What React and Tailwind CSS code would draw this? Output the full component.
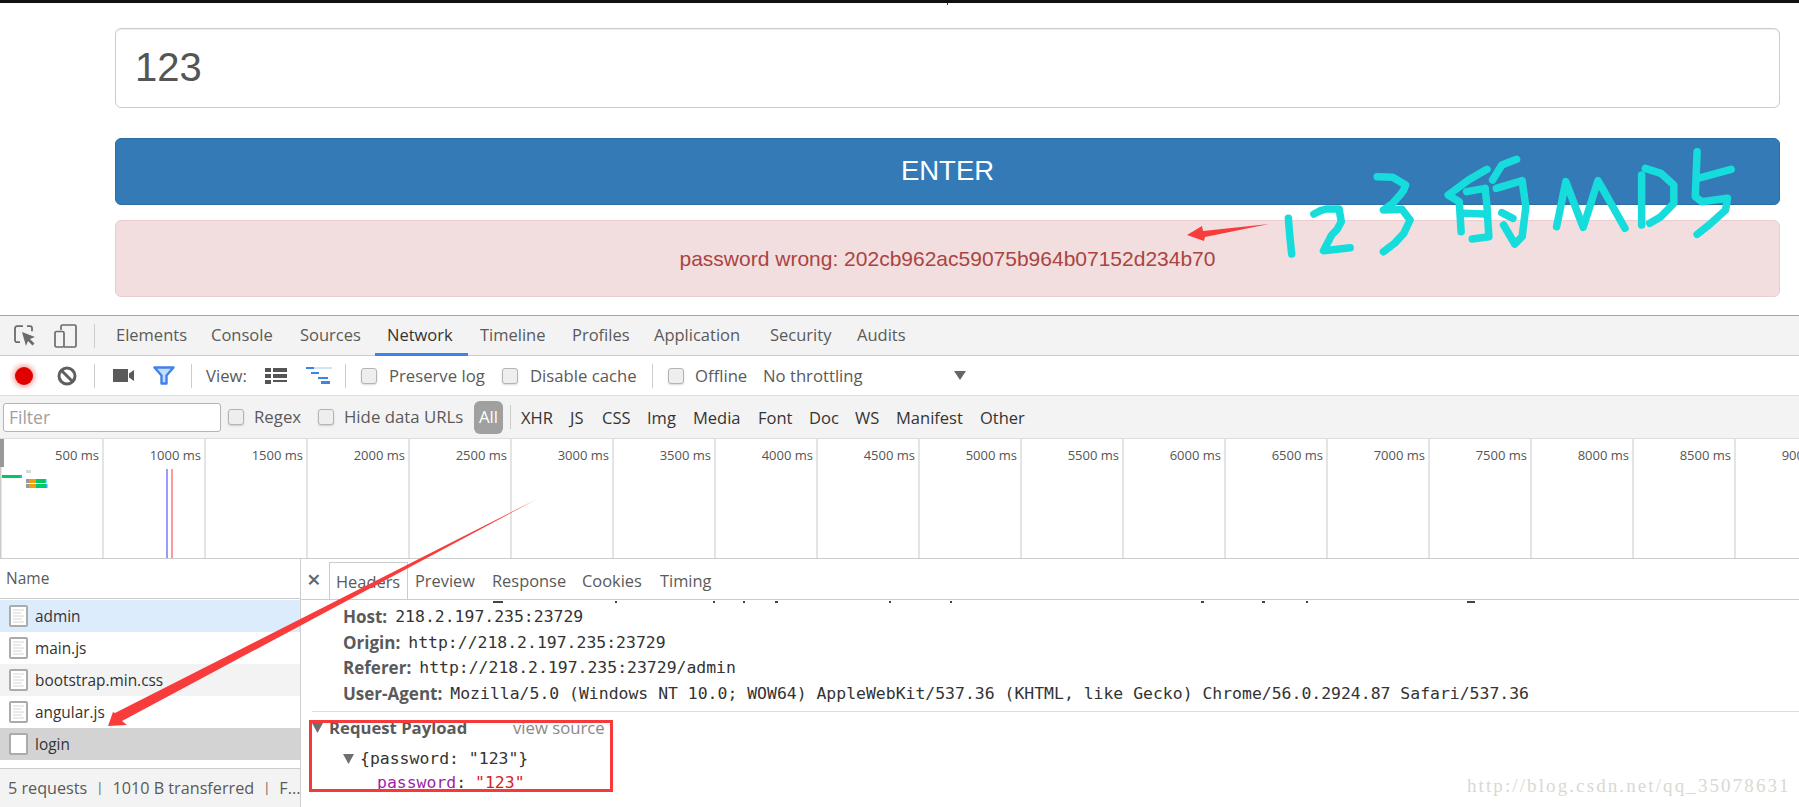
import React from "react";

const SANS = "font-['Open_Sans','Noto_Sans',sans-serif]";
const MONO = "font-['DejaVu_Sans_Mono',monospace]";

function Check({ className = "" }) {
  return <span className={"block shrink-0 w-[16px] h-[16px] rounded-[3px] border border-[#b4b4b4] bg-[#eeeeee] shadow-[0_1px_2px_rgba(0,0,0,0.15)] " + className} />;
}

function Sep({ className = "" }) {
  return <span className={"block shrink-0 w-[1px] bg-[#cccccc] " + className} />;
}

function FileIcon({ blank }) {
  return (
    <svg width="19" height="22" viewBox="0 0 19 22" className="shrink-0">
      <rect x="1" y="1" width="17" height="20" rx="1" fill="#fff" stroke="#ababab" strokeWidth="2" />
      {!blank && (
        <g stroke="#d5d5d5" strokeWidth="1.2">
          <path d="M4 5h11M4 8h8M4 11h11M4 14h9M4 17h11" />
        </g>
      )}
    </svg>
  );
}

const Triangle = ({ className = "" }) => (
  <svg width="11" height="10" viewBox="0 0 11 10" className={"shrink-0 " + className}>
    <path d="M0 0h11L5.5 10z" fill="#6e6e6e" />
  </svg>
);

const tabs = [
  ["Elements", "w-[95px]"],
  ["Console", "w-[89px]"],
  ["Sources", "w-[87px]"],
  ["Network", "w-[93px] text-[#333]"],
  ["Timeline", "w-[92px]"],
  ["Profiles", "w-[82px]"],
  ["Application", "w-[116px]"],
  ["Security", "w-[87px]"],
  ["Audits", "w-[70px]"],
];

const filters = [
  ["XHR", "w-[49px]"],
  ["JS", "w-[32px]"],
  ["CSS", "w-[45px]"],
  ["Img", "w-[46px]"],
  ["Media", "w-[65px]"],
  ["Font", "w-[51px]"],
  ["Doc", "w-[46px]"],
  ["WS", "w-[41px]"],
  ["Manifest", "w-[84px]"],
  ["Other", "w-[60px]"],
];

const times = [500, 1000, 1500, 2000, 2500, 3000, 3500, 4000, 4500, 5000, 5500, 6000, 6500, 7000, 7500, 8000, 8500, 9000];

const rows = [
  ["admin", "bg-[#dcecfc]", false],
  ["main.js", "bg-white", false],
  ["bootstrap.min.css", "bg-[#f3f3f3]", false],
  ["angular.js", "bg-white", false],
  ["login", "bg-[#d3d3d3]", true],
];

const strokes = [
  "293,235 295,265 297,290 302,342",
  "362,222 380,212 395,207 430,207 436,245 425,268 410,285 388,332 425,328 460,323",
  "533,110 575,112 610,135 605,150 595,165 575,190 550,210 600,208 622,240 605,280 580,310 550,335",
  "830,88 780,120 725,165 755,185 760,275",
  "775,155 825,145 830,200 835,290 790,297",
  "765,220 825,222",
  "910,58 870,75 845,120",
  "855,145 925,122 935,200 925,290 905,312 875,255",
  "870,218 900,235",
  "1018,260 1043,125 1090,262 1130,122 1165,190 1203,265",
  "1248,105 1248,255",
  "1258,85 1300,100 1335,135 1335,190 1300,230 1270,250",
  "1398,35 1393,170 1410,185 1480,175 1475,210 1430,255 1398,283",
  "1400,115 1490,88",
];

const clipped = [
  [493, 10], [615, 2], [713, 2], [743, 2], [775, 3], [889, 2], [950, 2], [1201, 3], [1262, 3], [1306, 2], [1467, 8],
];

export default function App() {
  return (
    <div className={"relative w-[1799px] h-[807px] overflow-hidden bg-white flex flex-col " + SANS}>
      <div className="h-[3px] bg-[#111] shrink-0" />

      <div className="h-[312px] shrink-0 pl-[115px] pr-[19px] pt-[25px] font-['Liberation_Sans',sans-serif]">
        <div className="h-[80px] border border-[#cccccc] rounded-[6px] pl-[19px] pb-[2px] flex items-center text-[40px] text-[#555555] shadow-[inset_0_1px_1px_rgba(0,0,0,0.075)]">
          123
        </div>
        <div className="mt-[30px] h-[67px] bg-[#337ab7] border border-[#2e6da4] rounded-[6px] pb-[2px] flex items-center justify-center text-[27.5px] text-white">
          ENTER
        </div>
        <div className="mt-[15px] h-[77px] bg-[#f2dede] border border-[#ebccd1] rounded-[6px] flex items-center justify-center text-[21px] text-[#a94442]">
          password wrong: 202cb962ac59075b964b07152d234b70
        </div>
      </div>

      <div className="flex-1 flex flex-col min-h-0 text-[#5a5a5a] border-t border-[#a3a3a3]">
        {/* main tabs */}
        <div className="h-[40px] shrink-0 bg-[#f3f3f3] border-b border-[#cccccc] flex items-center text-[16.5px] relative">
          <svg width="22" height="21" viewBox="0 0 22 21" className="ml-[14px] shrink-0">
            <path d="M9 1.2H3A2 2 0 0 0 1 3.2v12a2 2 0 0 0 2 2h3M13 1.2h3a2 2 0 0 1 2 2v3" fill="none" stroke="#6b6b6b" strokeWidth="1.8" />
            <path d="M8 7l13 5-5 2 4.5 4.5-2 2L14 16l-2 5z" fill="#6b6b6b" />
          </svg>
          <svg width="23" height="24" viewBox="0 0 23 24" className="ml-[18px] shrink-0">
            <path d="M7 6V2.5A1.5 1.5 0 0 1 8.500 1h12A1.500 1.500 0 0 1 22 2.500v19a1.500 1.500 0 0 1-1.500 1.500H10" fill="none" stroke="#6b6b6b" strokeWidth="1.7" />
            <rect x="1" y="7.500" width="9" height="15.500" rx="1.500" fill="none" stroke="#6b6b6b" strokeWidth="1.7" />
          </svg>
          <Sep className="ml-[17px] h-[24px]" />
          <div className="flex ml-[21px]">
            {tabs.map(([t, c]) => (
              <span key={t} className={"block " + c}>{t}</span>
            ))}
          </div>
          <span className="absolute left-[375px] top-[37px] w-[93px] h-[3px] bg-[#3d83ea]" />
        </div>

        {/* toolbar */}
        <div className="h-[40px] shrink-0 bg-white border-b border-[#dddddd] flex items-center text-[16.7px]">
          <span className="block ml-[15px] w-[18px] h-[18px] rounded-full bg-[#e00000] shadow-[0_0_5px_2px_rgba(224,0,0,0.35)] shrink-0" />
          <svg width="20" height="20" viewBox="0 0 20 20" className="ml-[24px] shrink-0">
            <circle cx="10" cy="10" r="8" fill="none" stroke="#5f5f5f" strokeWidth="3" />
            <path d="M4.500 4.500l11 11" stroke="#5f5f5f" strokeWidth="3" />
          </svg>
          <Sep className="ml-[17px] h-[24px]" />
          <svg width="21" height="13" viewBox="0 0 21 13" className="ml-[18px] shrink-0">
            <path d="M0 0h15v13H0zM16 4.500L21 1v11l-5-3.500z" fill="#5a5a5a" />
          </svg>
          <svg width="22" height="19" viewBox="0 0 22 19" className="ml-[19px] shrink-0">
            <path d="M1.500 1.500h19l-7 8v8h-5v-8z" fill="#c9dcf9" stroke="#3d83ea" strokeWidth="2.400" strokeLinejoin="round" />
          </svg>
          <Sep className="ml-[16px] h-[24px]" />
          <span className="block ml-[14px] w-[59px]">View:</span>
          <svg width="22" height="16" viewBox="0 0 22 16" className="shrink-0">
            <path d="M0 0h6v4H0zM8 0h14v4H8zM0 6h6v4H0zM8 6h14v4H8zM0 12h6v4H0zM8 12h14v2H8z" fill="#555" />
          </svg>
          <svg width="26" height="17" viewBox="0 0 26 17" className="ml-[19px] shrink-0">
            <path d="M8 0h18v2H8z" fill="#d5e3fa" />
            <path d="M0 0h8v2H0zM5 5h8v2H5zM12 10h10v2H12zM15 14h9v3h-9z" fill="#3d83ea" />
          </svg>
          <Sep className="ml-[13px] h-[24px]" />
          <Check className="ml-[15px]" />
          <span className="block ml-[12px] w-[113px]">Preserve log</span>
          <Check />
          <span className="block ml-[12px] w-[122px]">Disable cache</span>
          <Sep className="h-[24px]" />
          <Check className="ml-[15px]" />
          <span className="block ml-[11px] w-[68px]">Offline</span>
          <span className="block w-[191px]">No throttling</span>
          <svg width="12" height="9" viewBox="0 0 12 9" className="shrink-0">
            <path d="M0 0h12L6 9z" fill="#666" />
          </svg>
        </div>

        {/* filter bar */}
        <div className="h-[43px] shrink-0 bg-[#f3f3f3] border-b border-[#dddddd] flex items-center text-[16.8px]">
          <div className="ml-[3px] w-[218px] h-[29px] bg-white border border-[#b5b5b5] rounded-[3px] pl-[5px] flex items-center text-[17.5px] text-[#a0a0a0] shrink-0">Filter</div>
          <Check className="ml-[7px]" />
          <span className="block ml-[10px] w-[64px]">Regex</span>
          <Check />
          <span className="block ml-[10px] w-[130px]">Hide data URLs</span>
          <span className="block w-[29px] h-[33px] rounded-[6px] bg-[#a0a0a0] text-white flex items-center justify-center shrink-0">All</span>
          <Sep className="ml-[7px] h-[24px]" />
          <div className="flex ml-[10px] pt-[3px] text-[16.5px] text-[#333]">
            {filters.map(([t, c]) => (
              <span key={t} className={"block " + c}>{t}</span>
            ))}
          </div>
        </div>

        {/* overview */}
        <div className="h-[120px] shrink-0 relative border-b border-[#cccccc] flex overflow-hidden">
          <div className="flex shrink-0 pl-[2px]">
            {times.map((t) => (
              <div key={t} className="w-[102px] shrink-0 border-r-2 border-[#e4e4e4] text-right pr-[3px] pt-[6px] text-[13px] leading-[20px] text-[#555] whitespace-nowrap">
                {t} ms
              </div>
            ))}
          </div>
          <svg width="180" height="119" viewBox="0 0 180 119" className="absolute left-0 top-0">
            <rect x="0" y="0" width="4" height="28" fill="#999" />
            <rect x="0" y="28" width="1.500" height="91" fill="#ccc" />
            <rect x="2" y="36" width="18" height="3" fill="#00c864" />
            <rect x="20" y="36" width="2" height="3" fill="#22b8ee" />
            <rect x="26" y="31" width="5" height="3" fill="#d8d8d8" />
            <rect x="26" y="40" width="3" height="4" fill="#999" />
            <rect x="29" y="40" width="7" height="4" fill="#f39c12" />
            <rect x="36" y="40" width="9" height="4" fill="#00c864" />
            <rect x="45" y="40" width="1.500" height="4" fill="#22b8ee" />
            <rect x="26" y="45" width="3" height="4" fill="#999" />
            <rect x="29" y="45" width="7" height="4" fill="#f39c12" />
            <rect x="36" y="45" width="10" height="4" fill="#00c864" />
            <rect x="46" y="45" width="1.500" height="4" fill="#22b8ee" />
            <rect x="166" y="30" width="2" height="89" fill="#9a9aff" />
            <rect x="171" y="30" width="2" height="89" fill="#ff9a9a" />
          </svg>
        </div>

        {/* bottom split */}
        <div className="flex-1 flex min-h-0 text-[16px]">
          <div className="w-[301px] shrink-0 border-r border-[#cccccc] flex flex-col">
            <div className="h-[40px] shrink-0 border-b border-[#cccccc] flex items-center pl-[6px] pt-[1px] text-[15.5px]">Name</div>
            <div className="flex-1 pt-[1px] text-[15.4px] text-[#333]">
              {rows.map(([n, bg, blank]) => (
                <div key={n} className={"h-[32px] flex items-center pl-[9px] gap-[7px] " + bg}>
                  <FileIcon blank={blank} />
                  <span className="pt-[1px]">{n}</span>
                </div>
              ))}
            </div>
            <div className="h-[39px] shrink-0 bg-[#f3f3f3] border-t border-[#cccccc] flex items-center pl-[8px] text-[16.2px] whitespace-nowrap overflow-hidden">
              5 requests<span className="mx-[9px] text-[13px]">|</span>1010 B transferred<span className="mx-[9px] text-[13px]">|</span>F...
            </div>
          </div>

          <div className="flex-1 min-w-0 flex flex-col">
            <div className="h-[41px] shrink-0 border-b border-[#cccccc] flex items-end text-[16.4px]">
              <span className="block w-[28px] pl-[6px] self-center text-[24px] leading-none text-[#666] font-semibold">×</span>
              <span className="block w-[79px] h-[37px] border border-b-0 border-[#cccccc] pl-[6px] pt-[7px]">Headers</span>
              <span className="block w-[84px] h-[37px] pl-[7px] pt-[7px]">Preview</span>
              <span className="block w-[90px] h-[37px] pt-[7px]">Response</span>
              <span className="block w-[78px] h-[37px] pt-[7px]">Cookies</span>
              <span className="block h-[37px] pt-[7px]">Timing</span>
            </div>

            <div className="flex-1 min-h-0 overflow-hidden relative">
              <div className="pl-[42px] pt-[4px] whitespace-nowrap">
                {[
                  ["Host:", "218.2.197.235:23729"],
                  ["Origin:", "http://218.2.197.235:23729"],
                  ["Referer:", "http://218.2.197.235:23729/admin"],
                  ["User-Agent:", "Mozilla/5.0 (Windows NT 10.0; WOW64) AppleWebKit/537.36 (KHTML, like Gecko) Chrome/56.0.2924.87 Safari/537.36"],
                ].map(([k, v]) => (
                  <div key={k} className="h-[25.5px] leading-[25.5px] flex">
                    <b className="font-bold text-[17px] mr-[8px]">{k}</b>
                    <span className={MONO + " text-[16.46px] text-[#333]"}>{v}</span>
                  </div>
                ))}
              </div>
              <div className="ml-[11px] mt-[5px] h-[1px] bg-[#dddddd]" />
              <div className="ml-[11px] mt-[3px] h-[26px] flex items-center">
                <Triangle />
                <b className="block ml-[6px] w-[184px] text-[16.7px] font-bold">Request Payload</b>
                <span className="text-[16.7px] text-[#888]">view source</span>
              </div>
              <div className={"ml-[42px] mt-[5px] h-[26px] flex items-center text-[#333] " + MONO + " text-[16.46px]"}>
                <Triangle />
                <span className="ml-[6px]">{'{password: "123"}'}</span>
              </div>
              <div className={"ml-[76px] h-[22px] flex items-center text-[#333] " + MONO + " text-[16.46px]"}>
                <span className="text-[#9b1fa8]">password</span>: <span className="text-[#d8221c] ml-[9px]">"123"</span>
              </div>
            </div>
          </div>
        </div>
      </div>

      {/* annotations over the screenshot */}
      <span className="absolute left-[1467px] top-[772px] font-['Liberation_Serif',serif] text-[19px] text-[#d9d9d2] tracking-[2.1px] whitespace-nowrap">
        http://blog.csdn.net/qq_35078631
      </span>
      <div className="absolute left-[309px] top-[720px] w-[304px] h-[72px] border-[3px] border-[#f63a3a]" />
      <svg width="1799" height="807" viewBox="0 0 1799 807" className="absolute left-0 top-0 pointer-events-none">
        <rect x="947" y="3" width="1" height="2" fill="#333" />
        {clipped.map(([x, w]) => (
          <rect key={x} x={x} y="601" width={w} height="2" fill="#444" />
        ))}
        <polygon points="108,726 127,725 122,721 537,499 115,713 113,712" fill="#f83c3c" />
        <polygon points="1187,235 1202,226 1203,231 1269,224 1205,237 1204,241" fill="#f83c3c" />
        <svg x="1180" y="140" width="580" height="140" viewBox="0 0 1568 420" preserveAspectRatio="none">
          {strokes.map((p, i) => (
            <polyline key={i} points={p} fill="none" stroke="#16dcdc" strokeWidth="7.500" strokeLinecap="round" strokeLinejoin="round" vectorEffect="non-scaling-stroke" />
          ))}
        </svg>
      </svg>
    </div>
  );
}
